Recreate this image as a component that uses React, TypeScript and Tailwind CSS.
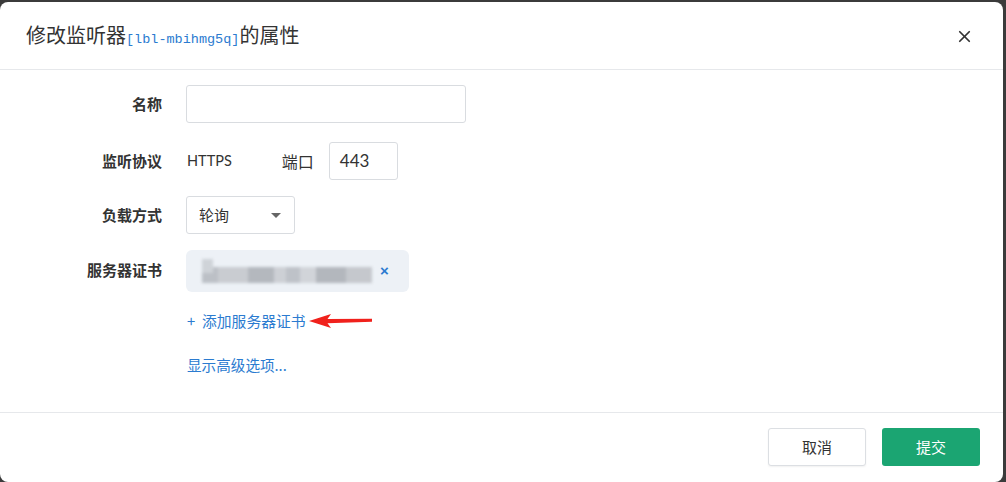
import { X } from "lucide-react";

const cjk = "font-['Noto_Sans_CJK_SC','Noto_Sans',sans-serif]";

function Label({ children }: { children: React.ReactNode }) {
	return (
		<div className="w-[162px] shrink-0 text-right text-[15px] font-bold text-[#333]">
			{children}
		</div>
	);
}

function RedArrow() {
	return (
		<svg width="64" height="16" viewBox="0 0 64 16" className="ml-[3px]">
			<path d="M0 8 L22 1 L18.5 6 L63 5.8 L63 8.8 L18.5 10.2 L22 15 Z" fill="#f0211c" />
		</svg>
	);
}

export default function App() {
	return (
		<div className={`h-[482px] w-[1006px] overflow-hidden bg-[#3b3b3b] pt-[2px] ${cjk}`}>
			<div className="flex h-[480px] w-[1003px] flex-col rounded-[8px] bg-white">
				<header className="flex h-[68px] shrink-0 items-center justify-between border-b border-[#e6e8eb] pl-[26px] pr-[29px]">
					<h2 className="flex items-baseline text-[20px] text-[#333]">
						修改监听器
						<span className="font-['Liberation_Mono',monospace] text-[13.5px] text-[#2b7bd0]">
							[lbl-mbihmg5q]
						</span>
						的属性
					</h2>
					<X className="mt-[2px] h-[19px] w-[19px] text-[#333]" strokeWidth={2.2} />
				</header>

				<form className="flex flex-1 flex-col pt-[15px]">
					<section className="flex items-center">
						<Label>名称</Label>
						<input
							className="ml-[24px] h-[38px] w-[280px] rounded-[3px] border border-[#d9dce0] px-3 text-[15px] outline-none"
							type="text"
						/>
					</section>

					<section className="mt-[19px] flex items-center">
						<Label>监听协议</Label>
						<span className="ml-[25px] font-['Lato','Noto_Sans',sans-serif] text-[14.5px] text-[#333]">
							HTTPS
						</span>
						<span className="ml-[50px] text-[16px] text-[#333]">端口</span>
						<div className="ml-[15px] flex h-[38px] w-[69px] items-center rounded-[3px] border border-[#d9dce0] pl-[10px] font-['Lato','Noto_Sans',sans-serif] text-[17px] text-[#333]">
							443
						</div>
					</section>

					<section className="mt-[16px] flex items-center">
						<Label>负载方式</Label>
						<div className="ml-[24px] flex h-[38px] w-[109px] items-center justify-between rounded-[3px] border border-[#d9dce0] pl-[12px] pr-[13px] text-[15px] text-[#333]">
							<span>轮询</span>
							<span className="h-0 w-0 border-x-[5px] border-t-[5px] border-x-transparent border-t-[#666]" />
						</div>
					</section>

					<section className="mt-[16px] flex items-start">
						<div className="pt-[9px]">
							<Label>服务器证书</Label>
						</div>
						<div className="ml-[24px] flex h-[42px] w-[223px] items-center rounded-[6px] bg-[#edf1f6] pl-[16px]">
							<div className="relative flex h-[26px] w-[170px] items-end pb-[1px] blur-[1.5px]">
								<div className="absolute left-0 top-[1px] h-[14px] w-[11px] bg-[#cfd3d8]" />
								<div className="h-[16px] w-[16px] bg-[#bcc0c6]" />
								<div className="h-[16px] w-[30px] bg-[#c9ccd1]" />
								<div className="h-[16px] w-[26px] bg-[#b4b8be]" />
								<div className="h-[16px] w-[12px] bg-[#cdd0d5]" />
								<div className="h-[16px] w-[14px] bg-[#bec2c8]" />
								<div className="h-[16px] w-[16px] bg-[#d1d4d9]" />
								<div className="h-[16px] w-[30px] bg-[#b3b7bd]" />
								<div className="h-[16px] w-[26px] bg-[#c5c8cd]" />
							</div>
							<span className="ml-[8px] font-['Liberation_Sans',sans-serif] text-[15px] font-bold text-[#2b7bd0]">
								×
							</span>
						</div>
					</section>

					<section className="mt-[18px] flex items-center pl-[187px]">
						<button type="button" className="flex items-center text-[14.8px] text-[#2b7bd0]">
							<span className="w-[15px] text-left">+</span>
							添加服务器证书
						</button>
						<RedArrow />
					</section>

					<section className="mt-[22px] flex items-center pl-[187px]">
						<button type="button" className="text-[14.6px] text-[#2b7bd0]">
							显示高级选项...
						</button>
					</section>
				</form>

				<footer className="flex h-[70px] shrink-0 items-start justify-end gap-[16px] border-t border-[#e6e8eb] pr-[23px] pt-[15px]">
					<button
						type="button"
						className="h-[38px] w-[98px] rounded-[3px] border border-[#dcdfe3] bg-white text-[15px] text-[#333] shadow-[0_1px_2px_rgba(0,0,0,0.06)]"
					>
						取消
					</button>
					<button
						type="submit"
						className="h-[38px] w-[98px] rounded-[3px] bg-[#1ba572] text-[15px] text-white"
					>
						提交
					</button>
				</footer>
			</div>
		</div>
	);
}
